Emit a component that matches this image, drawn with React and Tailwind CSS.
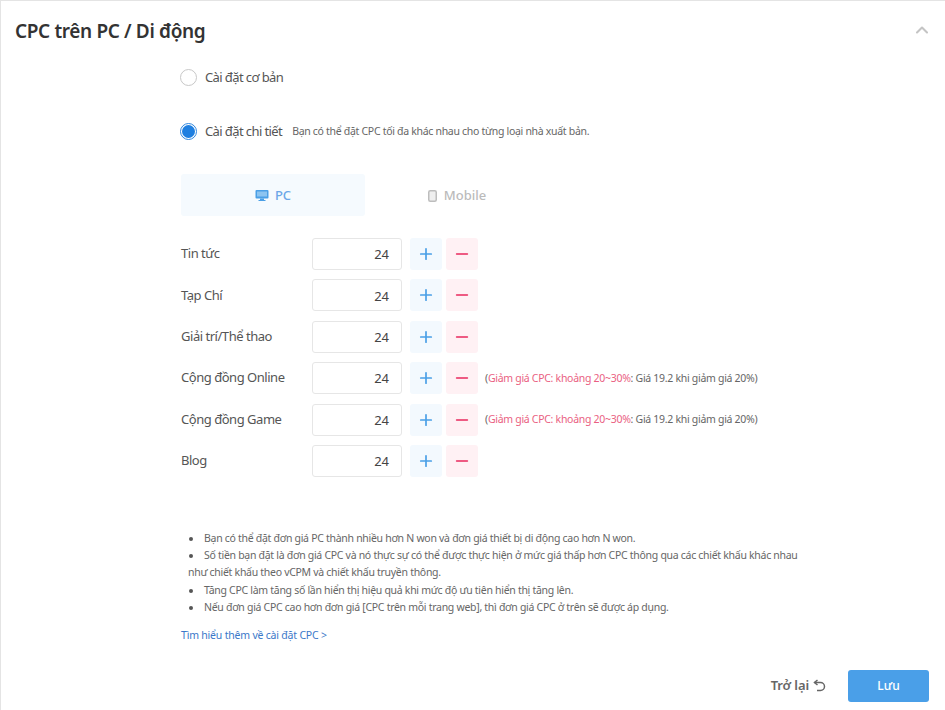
import { Plus, Minus, ChevronUp } from 'lucide-react';

const rows = [
	{ label: 'Tin tức' },
	{ label: 'Tạp Chí' },
	{ label: 'Giải trí/Thể thao' },
	{ label: 'Cộng đồng Online', note: true },
	{ label: 'Cộng đồng Game', note: true },
	{ label: 'Blog' },
];

const notes = [
	'Bạn có thể đặt đơn giá PC thành nhiều hơn N won và đơn giá thiết bị di động cao hơn N won.',
	'Số tiền bạn đặt là đơn giá CPC và nó thực sự có thể được thực hiện ở mức giá thấp hơn CPC thông qua các chiết khấu khác nhau như chiết khấu theo vCPM và chiết khấu truyền thông.',
	'Tăng CPC làm tăng số lần hiển thị hiệu quả khi mức độ ưu tiên hiển thị tăng lên.',
	'Nếu đơn giá CPC cao hơn đơn giá [CPC trên mỗi trang web], thì đơn giá CPC ở trên sẽ được áp dụng.',
];

function PcIcon() {
	return (
		<svg width="14" height="13" viewBox="0 0 14 13" className="shrink-0">
			<rect x="0.5" y="1" width="13" height="8.5" rx="1" fill="#4a9fe6" />
			<rect x="2" y="2.5" width="10" height="5" fill="#8cc4f0" />
			<path d="M5 9.5h4v1.5h1.5v1h-7v-1H5z" fill="#4a9fe6" />
		</svg>
	);
}

function MobileIcon() {
	return (
		<svg width="9" height="12" viewBox="0 0 9 12" className="shrink-0">
			<rect x="0.75" y="0.75" width="7.5" height="10.5" rx="1.5" fill="#efefef" stroke="#bdbdbd" strokeWidth="1.5" />
		</svg>
	);
}

function UndoIcon() {
	return (
		<svg width="13" height="13" viewBox="0 0 13 13" fill="none" stroke="currentColor" strokeWidth="1.5" className="shrink-0">
			<path d="M4.5 1 1.5 3.5 4.5 6" />
			<path d="M1.5 3.5H7.5a4 4 0 0 1 0 8H4" />
		</svg>
	);
}

function Row({ label, note }) {
	return (
		<div className="flex items-center h-8">
			<span className="w-[131px] text-[13px] tracking-[-0.47px] text-[#555]">{label}</span>
			<div className="w-[90px] h-8 border border-[#e6e6e6] rounded-[3px] flex items-center justify-end pr-[12px] pt-[2px] text-[13px] text-[#444]">24</div>
			<button className="ml-2 w-8 h-8 rounded-[3px] bg-[#f3f9fe] flex items-center justify-center text-[#4a9fe6]">
				<Plus size={18} strokeWidth={2.25} />
			</button>
			<button className="ml-1 w-8 h-8 rounded-[3px] bg-[#fff1f4] flex items-center justify-center text-[#ee5a82]">
				<Minus size={18} strokeWidth={2.5} />
			</button>
			{note && (
				<span className="ml-[7px] pt-[1px] text-[10.5px] tracking-[-0.29px] text-[#666]">
					(<span className="text-[#ea5f82]">Giảm giá CPC: khoảng 20~30%</span>: Giá 19.2 khi giảm giá 20%)
				</span>
			)}
		</div>
	);
}

export default function App() {
	return (
		<div className="w-[945px] h-[710px] bg-white border-t border-l border-[#e4e4e4] font-['Noto_Sans',sans-serif] overflow-hidden">
			<header className="flex items-center justify-between pl-[14px] pr-[13px] pt-[14px] h-[46px]">
				<h2 className="text-[19px] tracking-[-0.36px] font-semibold text-[#333]">CPC trên PC / Di động</h2>
				<ChevronUp size={20} strokeWidth={2.5} className="text-[#c4c4c4] -mt-[2px]" />
			</header>
			<main className="pl-[180px] pt-[19px]">
				<label className="flex items-center h-[22px] gap-2 -ml-[1px]">
					<span className="w-[17px] h-[17px] rounded-full border border-[#c8c8c8]"></span>
					<span className="pt-[1px] text-[13px] tracking-[-0.6px] text-[#555]">Cài đặt cơ bản</span>
				</label>
				<label className="flex items-center h-[22px] gap-2 mt-8 -ml-[1px]">
					<span className="w-[17px] h-[17px] rounded-full border border-[#2f87e0] flex items-center justify-center">
						<span className="w-[13px] h-[13px] rounded-full bg-[#1f7fe0]"></span>
					</span>
					<span className="pt-[1px] text-[13px] tracking-[-0.6px] text-[#555]">Cài đặt chi tiết</span>
					<span className="pt-[1px] text-[10.5px] tracking-[-0.3px] text-[#666] ml-[2px]">Bạn có thể đặt CPC tối đa khác nhau cho từng loại nhà xuất bản.</span>
				</label>
				<div className="flex mt-[32px]">
					<div className="w-[184px] h-[42px] rounded-[3px] bg-[#f5fafe] flex items-center justify-center gap-[6px] pt-[1px] text-[13px] font-medium text-[#6ba6e8]">
						<PcIcon />
						PC
					</div>
					<div className="w-[184px] h-[42px] flex items-center justify-center gap-[7px] pt-[1px] text-[13px] font-medium text-[#bbb]">
						<MobileIcon />
						Mobile
					</div>
				</div>
				<div className="flex flex-col gap-[9.4px] mt-[22px]">
					{rows.map((row) => (
						<Row key={row.label} label={row.label} note={row.note} />
					))}
				</div>
				<ul className="mt-[53px] ml-[7px] w-[618px] text-[10.5px] tracking-[-0.29px] leading-[17.2px] text-[#666]">
					{notes.map((note) => (
						<li key={note}><span className="inline-block align-middle w-1 h-1 ml-[1px] mr-[11px] rounded-full bg-[#555]"></span>{note}</li>
					))}
				</ul>
				<a className="block mt-[11px] text-[10.5px] tracking-[-0.2px] leading-[17px] text-[#3b78c9]">Tìm hiểu thêm về cài đặt CPC &gt;</a>
			</main>
			<footer className="flex items-center justify-end gap-[22px] pr-[16px] mt-[26px]">
				<button className="flex items-center gap-[4px] text-[13px] tracking-[-0.1px] font-semibold text-[#666]">
					Trở lại
					<UndoIcon />
				</button>
				<button className="w-[81px] h-8 rounded-[3px] bg-[#4a9fe8] text-white text-[12px] font-medium">Lưu</button>
			</footer>
		</div>
	);
}
